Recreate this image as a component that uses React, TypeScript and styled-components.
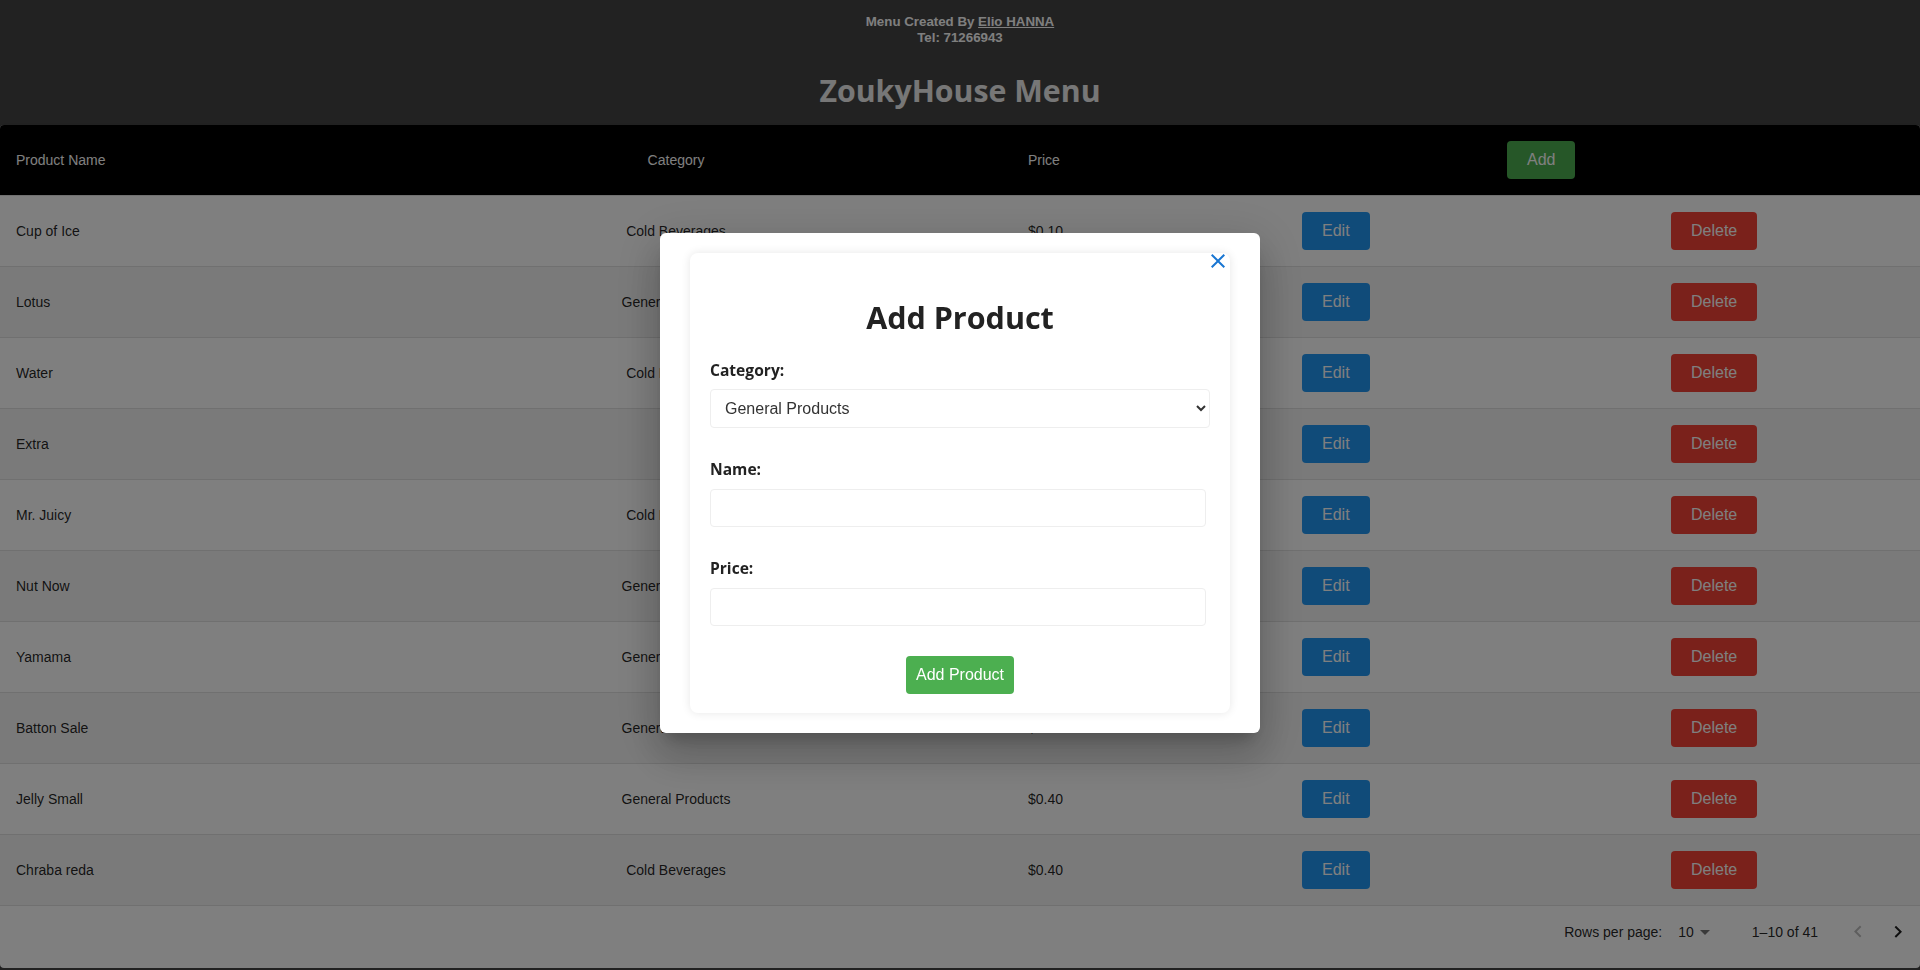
import React from 'react'
import styled, { createGlobalStyle } from 'styled-components'

const GlobalStyle = createGlobalStyle`
  body {
    margin: 0;
    background: #444;
    font-family: 'Liberation Sans', Arial, sans-serif;
  }
`

const Header = styled.header`
  text-align: center;
  padding-top: 14px;
`

const Credit = styled.p`
  margin: 0;
  color: #fff;
  font-size: 13.3px;
  font-weight: bold;
  line-height: 16px;

  a {
    color: inherit;
  }
`

const Title = styled.h1`
  margin: 24px 0 14px;
  font-family: 'Segoe UI', 'Open Sans', sans-serif;
  font-size: 30.3px;
  font-weight: 700;
  line-height: 41px;
  color: #eee;
`

const Paper = styled.div`
  background: #fff;
  border-radius: 4px;
  overflow: hidden;
  padding-bottom: 10px;
  box-shadow: 0 2px 1px -1px rgba(0, 0, 0, 0.2), 0 1px 1px 0 rgba(0, 0, 0, 0.14),
    0 1px 3px 0 rgba(0, 0, 0, 0.12);
`

const Table = styled.table`
  width: 100%;
  table-layout: fixed;
  border-collapse: separate;
  border-spacing: 0;
  font-size: 14px;
`

const HeadRow = styled.tr`
  background: #000;
`

const HeadCell = styled.th<{ $align?: string; $offset?: number }>`
  height: 38px;
  padding: 16px;
  padding-left: ${(p) => p.$offset ?? 16}px;
  text-align: ${(p) => p.$align ?? 'left'};
  font-weight: normal;
  color: #fff;
  border-bottom: 1px solid #e0e0e0;
  vertical-align: middle;
`

const BodyRow = styled.tr<{ $shade: boolean }>`
  background: ${(p) => (p.$shade ? '#f5f5f5' : '#fff')};
`

const Cell = styled.td<{ $align?: string }>`
  height: 38px;
  padding: 16px;
  text-align: ${(p) => p.$align ?? 'left'};
  color: rgba(0, 0, 0, 0.87);
  border-bottom: 1px solid #e0e0e0;
  vertical-align: middle;
`

const ActionButton = styled.button<{ $color: string; $wide?: boolean }>`
  display: inline-block;
  height: 38px;
  padding: 0 ${(p) => (p.$wide ? 10 : 20)}px;
  border: none;
  border-radius: 4px;
  background: ${(p) => p.$color};
  color: #fff;
  font-family: 'Liberation Sans', Arial, sans-serif;
  font-size: 16px;
  line-height: 18px;
  vertical-align: middle;
  cursor: pointer;
`

const Pagination = styled.div`
  display: flex;
  justify-content: flex-end;
  align-items: center;
  height: 52px;
  padding-right: 2px;
  font-size: 14px;
  color: rgba(0, 0, 0, 0.87);
`

const RowsSelect = styled.div`
  display: inline-flex;
  align-items: center;
  margin: 0 35px 0 8px;
  padding-left: 8px;

  svg {
    width: 24px;
    height: 24px;
    margin-left: -1px;
    fill: rgba(0, 0, 0, 0.54);
  }
`

const PageButtons = styled.div`
  display: flex;
  margin-left: 20px;
`

const IconButton = styled.button<{ $disabled?: boolean }>`
  display: flex;
  padding: 8px;
  border: none;
  background: none;
  color: ${(p) => (p.$disabled ? 'rgba(0, 0, 0, 0.26)' : 'rgba(0, 0, 0, 0.87)')};

  svg {
    width: 24px;
    height: 24px;
    fill: currentColor;
  }
`

const Overlay = styled.div`
  position: fixed;
  inset: 0;
  display: flex;
  align-items: center;
  justify-content: center;
  padding-bottom: 4px;
  box-sizing: border-box;
  background: rgba(0, 0, 0, 0.5);
`

const Modal = styled.div`
  position: relative;
  width: 600px;
  height: 500px;
  box-sizing: border-box;
  padding: 20px 30px;
  background: #fff;
  border-radius: 6px;
  box-shadow: 0 11px 15px -7px rgba(0, 0, 0, 0.2), 0 24px 38px 3px rgba(0, 0, 0, 0.14),
    0 9px 46px 8px rgba(0, 0, 0, 0.12);
`

const CloseButton = styled.button`
  position: absolute;
  top: 16px;
  right: 30px;
  display: flex;
  padding: 0;
  border: none;
  background: none;
  color: #1976d2;
  cursor: pointer;

  svg {
    width: 24px;
    height: 24px;
    fill: currentColor;
  }
`

const FormCard = styled.form`
  height: 100%;
  box-sizing: border-box;
  padding: 20px;
  border-radius: 8px;
  box-shadow: 0 0 10px rgba(0, 0, 0, 0.1);
  font-family: 'Segoe UI', 'Open Sans', sans-serif;
  color: #222;
`

const FormTitle = styled.h1`
  margin: 24px 0 20px;
  font-size: 30.5px;
  font-weight: 700;
  line-height: 41.5px;
  text-align: center;
`

const Label = styled.label<{ $gap: number }>`
  display: block;
  margin-bottom: ${(p) => p.$gap}px;
  font-size: 15.6px;
  font-weight: 700;
  line-height: 22px;
`

const Select = styled.select`
  display: block;
  width: 100%;
  height: 39px;
  margin-bottom: 30px;
  padding: 0 10px;
  border: 1px solid #eee;
  border-radius: 4px;
  background: #fff;
  color: #333;
  font-family: 'Liberation Sans', Arial, sans-serif;
  font-size: 16px;
`

const Input = styled.input`
  display: block;
  width: calc(100% - 4px);
  height: 38px;
  margin-bottom: 30px;
  padding: 0 10px;
  box-sizing: border-box;
  border: 1px solid #eee;
  border-radius: 4px;
  font-family: 'Liberation Sans', Arial, sans-serif;
  font-size: 16px;
`

const SubmitRow = styled.div`
  text-align: center;
`

const products = [
  { name: 'Cup of Ice', category: 'Cold Beverages', price: 0.1 },
  { name: 'Lotus', category: 'General Products', price: 0.5 },
  { name: 'Water', category: 'Cold Beverages', price: 0.25 },
  { name: 'Extra', category: 'Extra', price: 0.25 },
  { name: 'Mr. Juicy', category: 'Cold Beverages', price: 0.3 },
  { name: 'Nut Now', category: 'General Products', price: 0.3 },
  { name: 'Yamama', category: 'General Products', price: 0.2 },
  { name: 'Batton Sale', category: 'General Products', price: 0.2 },
  { name: 'Jelly Small', category: 'General Products', price: 0.4 },
  { name: 'Chraba reda', category: 'Cold Beverages', price: 0.4 },
]

const App: React.FC = () => {
  return (
    <>
      <GlobalStyle />
      <Header>
        <Credit>
          Menu Created By <a href="#">Elio HANNA</a>
        </Credit>
        <Credit>Tel: 71266943</Credit>
        <Title>ZoukyHouse Menu</Title>
      </Header>

      <Paper>
        <Table>
          <colgroup>
            <col style={{ width: 340 }} />
            <col style={{ width: 672 }} />
            <col style={{ width: 274 }} />
            <col style={{ width: 369 }} />
            <col />
          </colgroup>
          <thead>
            <HeadRow>
              <HeadCell>Product Name</HeadCell>
              <HeadCell $align="center">Category</HeadCell>
              <HeadCell>Price</HeadCell>
              <HeadCell $offset={221}>
                <ActionButton $color="#4caf50">Add</ActionButton>
              </HeadCell>
              <HeadCell />
            </HeadRow>
          </thead>
          <tbody>
            {products.map((p, i) => (
              <BodyRow key={p.name} $shade={i % 2 === 1}>
                <Cell>{p.name}</Cell>
                <Cell $align="center">{p.category}</Cell>
                <Cell>${p.price.toFixed(2)}</Cell>
                <Cell>
                  <ActionButton $color="#2196f3">Edit</ActionButton>
                </Cell>
                <Cell>
                  <ActionButton $color="#f44336">Delete</ActionButton>
                </Cell>
              </BodyRow>
            ))}
          </tbody>
        </Table>

        <Pagination>
          <span>Rows per page:</span>
          <RowsSelect>
            <span>10</span>
            <svg viewBox="0 0 24 24">
              <path d="M7 10l5 5 5-5z" />
            </svg>
          </RowsSelect>
          <span>1–10 of 41</span>
          <PageButtons>
            <IconButton $disabled>
              <svg viewBox="0 0 24 24">
                <path d="M15.41 16.09l-4.58-4.59 4.58-4.59L14 5.5l-6 6 6 6z" />
              </svg>
            </IconButton>
            <IconButton>
              <svg viewBox="0 0 24 24">
                <path d="M8.59 16.34l4.58-4.59-4.58-4.59L10 5.75l6 6-6 6z" />
              </svg>
            </IconButton>
          </PageButtons>
        </Pagination>
      </Paper>

      <Overlay>
        <Modal>
          <FormCard onSubmit={(e) => e.preventDefault()}>
            <FormTitle>Add Product</FormTitle>
            <Label $gap={8} htmlFor="category">
              Category:
            </Label>
            <Select id="category" defaultValue="General Products">
              <option>General Products</option>
              <option>Cold Beverages</option>
              <option>Extra</option>
            </Select>
            <Label $gap={9} htmlFor="name">
              Name:
            </Label>
            <Input id="name" type="text" />
            <Label $gap={9} htmlFor="price">
              Price:
            </Label>
            <Input id="price" type="text" />
            <SubmitRow>
              <ActionButton $color="#4caf50" $wide type="submit">
                Add Product
              </ActionButton>
            </SubmitRow>
          </FormCard>
          <CloseButton aria-label="close">
            <svg viewBox="0 0 24 24">
              <path d="M19 6.41 17.59 5 12 10.59 6.41 5 5 6.41 10.59 12 5 17.59 6.41 19 12 13.41 17.59 19 19 17.59 13.41 12z" />
            </svg>
          </CloseButton>
        </Modal>
      </Overlay>
    </>
  )
}

export default App
